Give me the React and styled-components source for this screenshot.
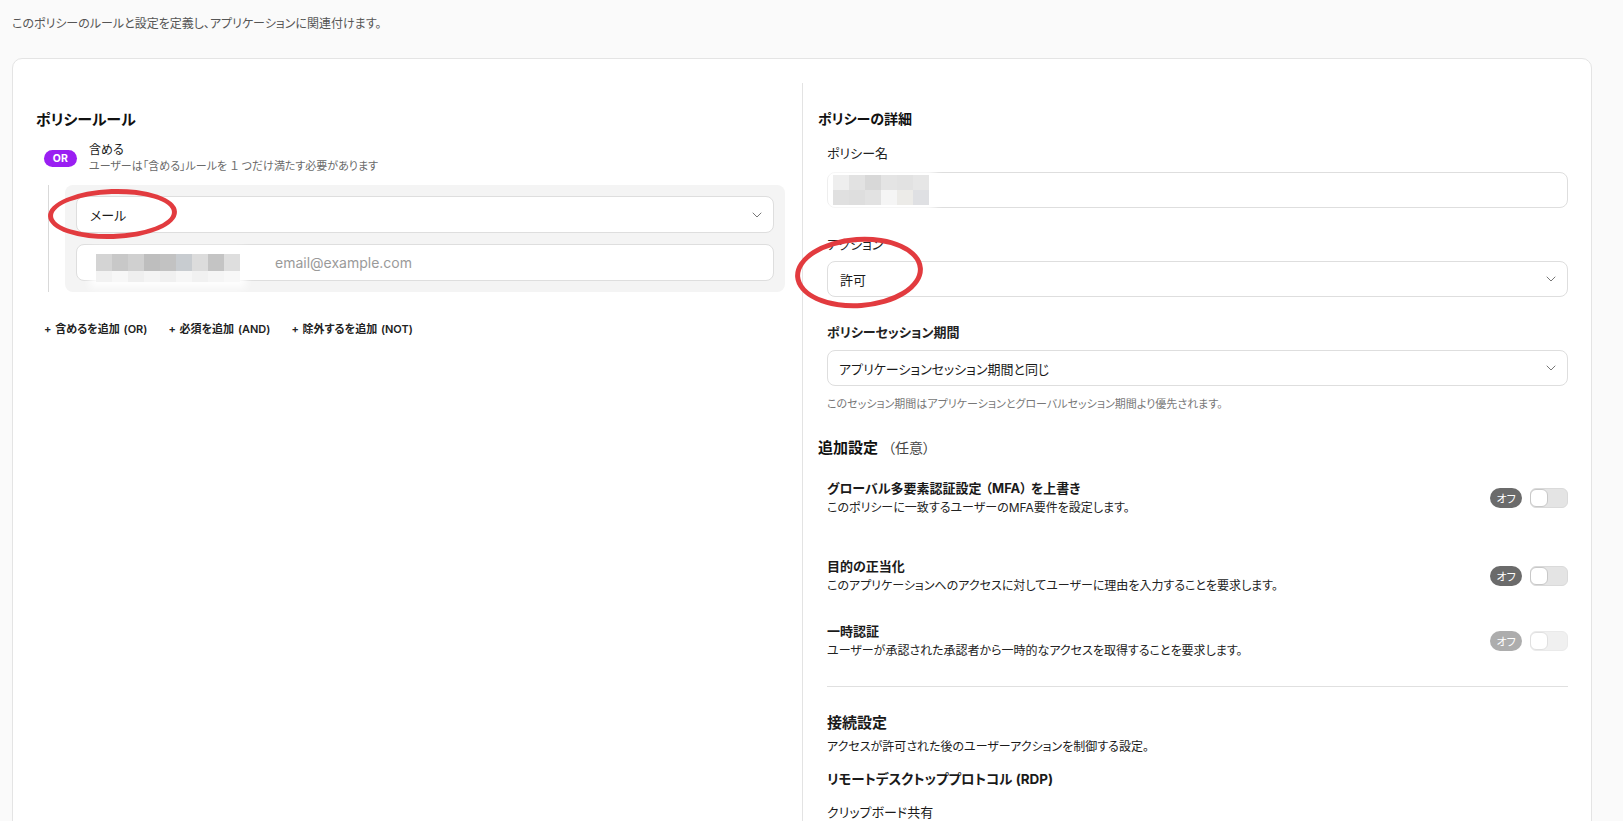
import React from "react";
import styled, { createGlobalStyle } from "styled-components";
import { ChevronDown } from "lucide-react";

const Global = createGlobalStyle`
  html, body { margin: 0; padding: 0; background: #fafafa; }
  body {
    font-family: Inter, "Noto Sans CJK JP", "Noto Sans", sans-serif;
    font-feature-settings: "palt" 1;
    color: #1c1c1c;
    -webkit-font-smoothing: antialiased;
  }
  * { box-sizing: border-box; }
`;

const Page = styled.div`
  padding: 15px 31px 0 12px;
  height: 821px;
  overflow: hidden;
`;

const Intro = styled.p`
  margin: 0;
  font-size: 12px;
  line-height: 18px;
  color: #555;
`;

const Card = styled.div`
  margin-top: 25px;
  background: #fff;
  border: 1px solid #e4e4e4;
  border-radius: 10px;
  padding-top: 24px;
  display: grid;
  grid-template-columns: 789px 1fr;
  min-height: 900px;
`;

const LeftCol = styled.section`
  padding: 27px 17px 0 23px;
`;

const RightCol = styled.section`
  border-left: 1px solid #e3e3e3;
  padding: 26px 23px 40px 15px;
`;

const Heading = styled.h2`
  margin: 0;
  font-size: ${(p) => p.$size || 14}px;
  font-weight: 700;
  line-height: 20px;
  color: #111;
`;

const OrRow = styled.div`
  display: flex;
  align-items: center;
  gap: 12px;
  margin-top: 11px;
  padding-left: 8px;
`;

const Badge = styled.span`
  width: 33px;
  height: 17px;
  border-radius: 9px;
  background: #9a1ff2;
  color: #fff;
  font-family: Inter, sans-serif;
  font-size: 10.5px;
  font-weight: 700;
  display: flex;
  align-items: center;
  justify-content: center;
  letter-spacing: 0.3px;
`;

const OrText = styled.div`
  display: flex;
  flex-direction: column;
`;

const OrTitle = styled.span`
  font-size: 12px;
  line-height: 17px;
  color: #1a1a1a;
`;

const OrSub = styled.span`
  font-size: 11px;
  line-height: 17px;
  color: #6a6a6a;
`;

const RuleGroup = styled.div`
  margin-top: 10px;
  margin-left: 12px;
  border-left: 1px solid #d9d9d9;
  padding-left: 16px;
`;

const RuleBox = styled.div`
  position: relative;
  background: #f4f4f4;
  border-radius: 8px;
  padding: 11px;
  display: flex;
  flex-direction: column;
  gap: 11px;
`;

const Box = styled.div`
  height: ${(p) => p.$h || 37}px;
  background: #fff;
  border: 1px solid #dedede;
  border-radius: 8px;
  display: flex;
  align-items: center;
  justify-content: space-between;
  padding: 0 8px 0 ${(p) => p.$pl || 13}px;
  font-size: 13px;
  color: #1a1a1a;
`;

const InputInner = styled.div`
  display: flex;
  align-items: center;
  height: 100%;
`;

const Placeholder = styled.span`
  font-family: Inter, sans-serif;
  font-size: 14px;
  color: #9a9a9a;
  margin-left: ${(p) => p.$ml || 0}px;
`;

const Mosaic = styled.div`
  display: grid;
  grid-template-columns: repeat(${(p) => p.$cols}, ${(p) => p.$cw}px);
  grid-template-rows: ${(p) => p.$rows};
  align-self: flex-start;
  margin-top: ${(p) => p.$mt}px;
  box-shadow: 0 0 8px 6px rgba(255, 255, 255, 0.9);
`;

const Cell = styled.div`
  background: ${(p) => p.$c};
`;

const Chevron = styled(ChevronDown)`
  color: #777;
  flex-shrink: 0;
`;

const Ellipse = styled.div`
  position: absolute;
  left: ${(p) => p.$x}px;
  top: ${(p) => p.$y}px;
  width: ${(p) => p.$w}px;
  height: ${(p) => p.$h}px;
  border: 5px solid #e23b3f;
  border-radius: 50%;
  transform: rotate(${(p) => p.$r || 0}deg);
  pointer-events: none;
  z-index: 2;
`;

const AddRow = styled.div`
  display: flex;
  gap: 21px;
  margin-top: 29px;
  padding-left: 8px;
`;

const AddButton = styled.button`
  border: none;
  background: none;
  padding: 0;
  font-family: inherit;
  font-feature-settings: "palt" 1;
  font-size: 11px;
  font-weight: 600;
  line-height: 16px;
  color: #222;
  cursor: pointer;
  word-spacing: 1px;
`;

const Fields = styled.div`
  margin-left: 9px;
`;

const Field = styled.div`
  position: relative;
  margin-top: ${(p) => p.$mt}px;
`;

const Label = styled.div`
  font-size: 13px;
  line-height: 18px;
  font-weight: ${(p) => (p.$bold ? 700 : 400)};
  color: #222;
  margin-bottom: ${(p) => p.$mb}px;
`;

const Help = styled.div`
  margin-top: 10px;
  font-size: 11px;
  line-height: 16px;
  color: #777;
`;

const SectionTitle = styled.h3`
  margin: 26px 0 0;
  font-size: 15px;
  font-weight: 700;
  line-height: 20px;
  color: #111;
`;

const Optional = styled.span`
  font-size: 14px;
  font-weight: 400;
  color: #444;
  margin-left: 10px;
`;

const ToggleRow = styled.div`
  display: flex;
  align-items: center;
  justify-content: space-between;
  margin-top: ${(p) => p.$mt}px;
`;

const ToggleText = styled.div`
  display: flex;
  flex-direction: column;
`;

const ToggleTitle = styled.span`
  font-size: 13px;
  line-height: 20px;
  font-weight: 700;
  color: #1a1a1a;
`;

const Paren = styled.span`
  margin: 0 4px;
`;

const ToggleDesc = styled.span`
  font-size: 12px;
  line-height: 20px;
  color: #222;
`;

const ToggleCtrl = styled.div`
  display: flex;
  align-items: center;
  gap: 8px;
  opacity: ${(p) => (p.$disabled ? 0.55 : 1)};
`;

const Pill = styled.span`
  width: 32px;
  height: 20px;
  border-radius: 10px;
  background: #6b6b6b;
  color: #fff;
  font-size: 11px;
  display: flex;
  align-items: center;
  justify-content: center;
`;

const Switch = styled.span`
  width: 38px;
  height: 20px;
  border-radius: 6px;
  background: #e4e4e4;
  border: 1px solid #dadada;
  display: flex;
  align-items: center;
`;

const Knob = styled.span`
  width: 18px;
  height: 18px;
  margin-left: -1px;
  border-radius: 6px;
  background: #fff;
  border: 1px solid #c8c8c8;
`;

const Divider = styled.hr`
  margin: 25px 0 0;
  border: none;
  border-top: 1px solid #e0e0e0;
`;

const SubHeading = styled.div`
  margin-top: ${(p) => p.$mt}px;
  font-size: ${(p) => p.$size || 13}px;
  line-height: ${(p) => p.$lh || 20}px;
  font-weight: ${(p) => (p.$bold ? 700 : 400)};
  color: #1a1a1a;
`;

const emailRow1 = ["#d4d4d4", "#c8c8c8", "#d0d0d0", "#bebebe", "#c2c2c2", "#c8ccd0", "#dcdcdc", "#c4c4c4", "#dedede"];
const emailRow2 = ["#f2f2f2", "#f7f7f7", "#efefef", "#f4f4f4", "#f0f0f0", "#f6f6f6", "#f1f1f1", "#f5f5f5", "#f8f8f8"];
const nameRow1 = ["#eeeeee", "#e2e2e2", "#d8d8d8", "#e4e4e4", "#e2e2e2", "#e6e6e6"];
const nameRow2 = ["#e0e0e0", "#dedede", "#e2e2e2", "#f5f5f5", "#ecebe8", "#dfe0e3"];

function Toggle({ disabled }) {
  return (
    <ToggleCtrl $disabled={disabled}>
      <Pill>オフ</Pill>
      <Switch>
        <Knob />
      </Switch>
    </ToggleCtrl>
  );
}

export default function App() {
  return (
    <>
      <Global />
      <Page>
        <Intro>このポリシーのルールと設定を定義し、アプリケーションに関連付けます。</Intro>
        <Card>
          <LeftCol>
            <Heading $size={15}>ポリシールール</Heading>
            <OrRow>
              <Badge>OR</Badge>
              <OrText>
                <OrTitle>含める</OrTitle>
                <OrSub>ユーザーは「含める」ルールを １ つだけ満たす必要があります</OrSub>
              </OrText>
            </OrRow>
            <RuleGroup>
              <RuleBox>
                <Box>
                  <span>メール</span>
                  <Chevron size={16} strokeWidth={1.5} />
                </Box>
                <Box $pl={19}>
                  <InputInner>
                    <Mosaic $cols={9} $cw={16} $rows="17px 11px" $mt={9}>
                      {emailRow1.concat(emailRow2).map((c, i) => (
                        <Cell key={i} $c={c} />
                      ))}
                    </Mosaic>
                    <Placeholder $ml={35}>email@example.com</Placeholder>
                  </InputInner>
                </Box>
                <Ellipse $x={-17} $y={4} $w={129} $h={50} $r={-2} />
              </RuleBox>
            </RuleGroup>
            <AddRow>
              <AddButton>+ 含めるを追加 (OR)</AddButton>
              <AddButton>+ 必須を追加 (AND)</AddButton>
              <AddButton>+ 除外するを追加 (NOT)</AddButton>
            </AddRow>
          </LeftCol>

          <RightCol>
            <Heading>ポリシーの詳細</Heading>
            <Fields>
              <Field $mt={15}>
                <Label $mb={10}>ポリシー名</Label>
                <Box $h={36} $pl={5}>
                  <InputInner>
                    <Mosaic $cols={6} $cw={16} $rows="15px 15px" $mt={2}>
                      {nameRow1.concat(nameRow2).map((c, i) => (
                        <Cell key={i} $c={c} />
                      ))}
                    </Mosaic>
                  </InputInner>
                </Box>
              </Field>
              <Field $mt={27}>
                <Label $mb={8}>アクション</Label>
                <Box $h={36} $pl={12}>
                  <span>許可</span>
                  <Chevron size={16} strokeWidth={1.5} />
                </Box>
                <Ellipse $x={-32} $y={2} $w={128} $h={71} $r={-4} />
              </Field>
              <Field $mt={26}>
                <Label $bold $mb={9}>ポリシーセッション期間</Label>
                <Box $h={36} $pl={11}>
                  <span>アプリケーションセッション期間と同じ</span>
                  <Chevron size={16} strokeWidth={1.5} />
                </Box>
                <Help>このセッション期間はアプリケーションとグローバルセッション期間より優先されます。</Help>
              </Field>
            </Fields>

            <SectionTitle>
              追加設定<Optional>（任意）</Optional>
            </SectionTitle>

            <Fields>
              <ToggleRow $mt={20}>
                <ToggleText>
                  <ToggleTitle>
                    グローバル多要素認証設定<Paren>（MFA）</Paren>を上書き
                  </ToggleTitle>
                  <ToggleDesc>このポリシーに一致するユーザーのMFA要件を設定します。</ToggleDesc>
                </ToggleText>
                <Toggle />
              </ToggleRow>
              <ToggleRow $mt={38}>
                <ToggleText>
                  <ToggleTitle>目的の正当化</ToggleTitle>
                  <ToggleDesc>このアプリケーションへのアクセスに対してユーザーに理由を入力することを要求します。</ToggleDesc>
                </ToggleText>
                <Toggle />
              </ToggleRow>
              <ToggleRow $mt={25}>
                <ToggleText>
                  <ToggleTitle>一時認証</ToggleTitle>
                  <ToggleDesc>ユーザーが承認された承認者から一時的なアクセスを取得することを要求します。</ToggleDesc>
                </ToggleText>
                <Toggle disabled />
              </ToggleRow>

              <Divider />

              <SubHeading $mt={25} $size={15} $lh={22} $bold>接続設定</SubHeading>
              <SubHeading $mt={3} $size={12}>アクセスが許可された後のユーザーアクションを制御する設定。</SubHeading>
              <SubHeading $mt={12} $size={13.5} $bold>リモートデスクトッププロトコル (RDP)</SubHeading>
              <SubHeading $mt={13}>クリップボード共有</SubHeading>
            </Fields>
          </RightCol>
        </Card>
      </Page>
    </>
  );
}
